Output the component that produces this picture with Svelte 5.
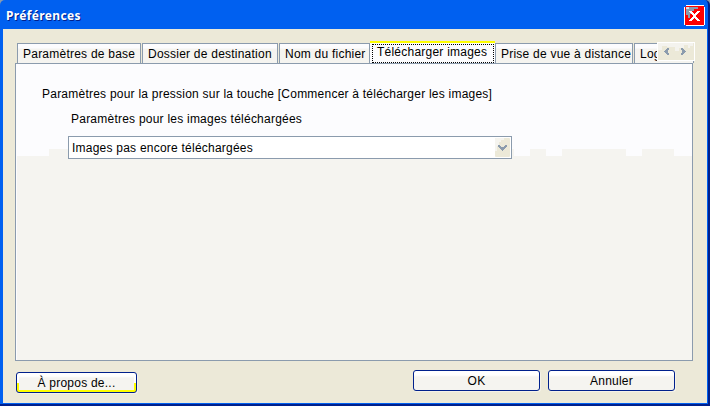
<script>
  const tabs = [
    { label: 'Paramètres de base', width: 124, gap: 1 },
    { label: 'Dossier de destination', width: 136, gap: 1 },
    { label: 'Nom du fichier', width: 91, gap: 0 },
    { label: 'Télécharger images', width: 125, gap: 0, active: true },
    { label: 'Prise de vue à distance', width: 138, gap: 1 },
    { label: 'Log', width: 60, gap: 0 }
  ];
  // Stepped boundary between the light and shaded halves of the page
  const shade = 'M1 92H33V85H498V92H514V85H530V92H546V85H610V92H626V85H658V92H676V296H1Z';
</script>

<div class="window">
  <header>
    <h1>Préférences</h1>
    <button class="close" aria-label="Fermer">
      <svg width="22" height="22" viewBox="0 0 22 22" shape-rendering="crispEdges">
        <path d="M2 1H20V2H21V20H20V21H2V20H1V2H2Z" fill="#f00" />
        <path d="M2 2H14V4H10V6H8V9H6V13H4V10H2Z" fill="#8b9bad" />
        <path d="M2 2H5V4H2Z" fill="#d9e0e8" />
        <path d="M2 .5H20M2 20.5H20M.5 2V20M20.5 2V20" stroke="#fff" fill="none" />
        <path d="M5 6H8V7H9V8H10V9H11V8H12V7H13V6H16V7H15V8H14V9H13V10H12V12H13V13H14V14H15V15H16V16H13V15H12V14H11V13H10V14H9V15H8V16H5V15H6V14H7V13H8V12H9V10H8V9H7V8H6V7H5Z" fill="#fff" />
      </svg>
    </button>
  </header>
  <main>
    <div class="strip">
      {#each tabs as tab}
        <button class="tab" class:active={tab.active} style="width:{tab.width}px;margin-right:{tab.gap}px">
          <span>{tab.label}</span>
        </button>
      {/each}
      <div class="scroller">
        <svg width="38" height="19" viewBox="0 0 38 19" shape-rendering="crispEdges">
          <path d="M1 1H36V4H33V6H31V3H27V6H22V9H18V5H10V4H5V8H1Z" fill="#f4f3ee" />
          <path d="M12 6V8H11V11H12V13H10V12H9V11H8V10H7V9H8V8H9V7H10V6Z" fill="#8b9bad" />
          <path d="M24 6V8H25V11H24V13H26V12H27V11H28V10H29V9H28V8H27V7H26V6Z" fill="#8b9bad" />
        </svg>
      </div>
    </div>
    <section>
      <svg class="shade" width="677" height="297" viewBox="0 0 677 297" shape-rendering="crispEdges">
        <path d={shade} fill="#f5f4f0" />
      </svg>
      <p class="first">Paramètres pour la pression sur la touche [Commencer à télécharger les images]</p>
      <p class="second">Paramètres pour les images téléchargées</p>
      <button class="select">
        <span>Images pas encore téléchargées</span>
        <i>
          <svg width="15" height="20" viewBox="0 0 15 20" shape-rendering="crispEdges">
            <path d="M0 0H9V2H6V4H4V8H2V13H0Z" fill="#f5f4ef" />
            <path d="M3 7H5V8H6V9H9V8H10V7H12V9H11V10H10V11H9V12H8V13H7V12H6V11H5V10H4V9H3Z" fill="#8b9bad" />
          </svg>
        </i>
      </button>
    </section>
    <footer>
      <button class="btn about"><span>À propos de...</span></button>
      <div class="actions">
        <button class="btn ok"><span>OK</span></button>
        <button class="btn cancel"><span>Annuler</span></button>
      </div>
    </footer>
  </main>
</div>

<style>
  :global(body) { background: #8b9bad; }
  * { box-sizing: border-box; }
  .window {
    width: 710px; height: 406px; display: flex; flex-direction: column;
    background: #0060f0; border-radius: 5px 5px 0 0; overflow: hidden;
    border-right: 2px solid #00208c; border-bottom: 2px solid #00208c;
    font: 12px/14px "Liberation Sans", Arial, sans-serif; color: #000;
    letter-spacing: .23px;
  }
  button { font: inherit; letter-spacing: inherit; color: inherit; margin: 0; padding: 0; border: 0; background: none; }
  header { height: 29px; flex: none; display: flex; justify-content: space-between; padding: 5px 2px 0 6px; }
  h1 {
    margin: 4px 0 0; font: bold 12px/14px "Noto Sans", "DejaVu Sans", sans-serif;
    color: #fff; letter-spacing: .35px; text-shadow: 1px 1px 0 #00208c;
  }
  .close { width: 22px; height: 22px; }
  svg { display: block; }
  main { flex: 1; margin: 0 1px 1px 3px; padding: 12px 13px 0 12px; background: #ece9d8; }
  .strip { display: flex; align-items: flex-end; height: 22px; padding-left: 2px; position: relative; width: 680px; overflow: hidden; }
  .tab {
    flex: none; height: 20px; border: 1px solid #8b9bad; border-bottom: 0; text-align: left;
    padding: 2px 0 1px 5px; white-space: nowrap; background: linear-gradient(#fcfcfe 0 4px, #f5f4f0 5px);
  }
  .tab span { display: block; }
  .tab.active {
    height: 22px; border: 0; border-top: 2px solid #ff0; background: #fcfcfe; padding: 1px 1px 0 2px;
  }
  .active span { border: 1px dotted #000; height: 19px; padding: 0 0 0 4px; }
  .scroller { position: absolute; left: 642px; top: 1px; width: 38px; height: 19px; background: #ece9d8; border: 1px solid #fff; }
  .scroller svg { margin: -1px; }
  section {
    position: relative; width: 678px; height: 298px; border: 1px solid #8b9bad; background: #fcfcfe;
    padding: 23px 26px 0;
  }
  .shade { position: absolute; left: 0; top: 0; }
  p { position: relative; margin: 0; white-space: nowrap; }
  .second { margin: 11px 0 0 29px; }
  .select {
    position: relative; display: flex; justify-content: space-between; margin: 10px 0 0 26px;
    width: 444px; height: 23px; border: 1px solid #8b9bad; background: #fff; padding: 1px; text-align: left;
  }
  .select span { padding: 3px 0 0 2px; }
  .select i { width: 15px; height: 19px; background: #ece9d8; border-radius: 1px; overflow: hidden; }
  footer { display: flex; justify-content: space-between; padding: 9px 19px 0 1px; }
  .actions { display: flex; gap: 8px; }
  .btn {
    width: 127px; height: 21px; border: 1px solid #00208c; border-radius: 3px;
    background: linear-gradient(#fff 0 4px, #f5f4f0 6px); box-shadow: 1px 1px 0 #f5f2e8;
  }
  .about {
    width: 121px; margin-top: 2px;
    background: linear-gradient(#fff 0 3px, #f5f4f0 5px) 2px 0 / 115px 17px no-repeat, linear-gradient(#fff 0 10px, #ff0 10px);
  }
  .btn span { display: block; }
</style>
